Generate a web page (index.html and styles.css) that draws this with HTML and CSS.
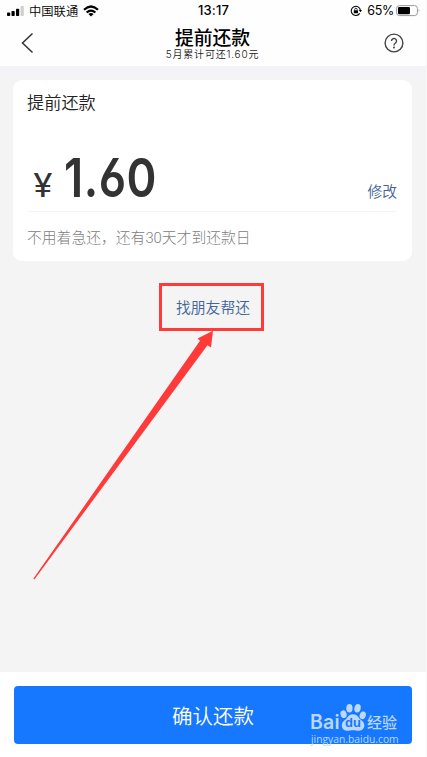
FILE: index.html
```html
<!DOCTYPE html>
<html lang="zh-CN">
<head>
<meta charset="utf-8">
<title>提前还款</title>
<link rel="stylesheet" href="styles.css">
</head>
<body>
<div class="screen">
  <header class="top">
    <div class="status">
      <div class="status-left">
        <svg class="signal" width="18" height="11" viewBox="0 0 18 11"><g fill="#000"><rect x="0" y="6.5" width="3.2" height="3.5" rx=".8"/><rect x="4.5" y="5" width="3.2" height="5" rx=".8"/><rect x="9" y="2.7" width="3.2" height="7.3" rx=".8"/></g><rect x="13.6" y="0" width="3.2" height="10" rx=".8" fill="#cfcfcf"/></svg>
        <span class="carrier">中国联通</span>
        <svg class="wifi" width="16" height="12" viewBox="0 0 16 12"><g fill="none" stroke="#000" stroke-width="2.2"><path d="M1 4.7Q8-1.7 15 4.7"/><path d="M3.6 7.5Q8 3.7 12.4 7.5"/></g><path d="M5.4 8.9Q8 7 10.6 8.9L8 11.6Z"/></svg>
      </div>
      <span class="clock">13:17</span>
      <div class="status-right">
        <svg class="lock" width="12" height="12" viewBox="0 0 12 12"><path d="M10.400 5.300A4.600 4.600 0 1 0 9.700 8.400" fill="none" stroke="#000" stroke-width="1.1"/><path d="M8.700 5H12L10.500 7.2Z"/><rect x="3.8" y="5.300" width="4.200" height="3" rx=".4"/><path d="M4.600 5.500V4.600a1.300 1.300 0 0 1 2.600 0v.9" fill="none" stroke="#000" stroke-width=".8"/></svg>
        <span class="percent">65%</span>
        <svg class="battery" width="25" height="12" viewBox="0 0 25 12"><rect x=".6" y=".6" width="20.8" height="10" rx="2.8" fill="none" stroke="#999" stroke-width="1"/><rect x="2" y="2" width="12" height="7.2" rx="1.3"/><path d="M22.7 3.8q1.5 1.8 0 3.6z" fill="#999"/></svg>
      </div>
    </div>
    <nav class="nav">
      <svg class="back" width="14" height="22" viewBox="0 0 14 22"><path d="M12.500 1.500L2.500 11l10 9.500" fill="none" stroke="#333" stroke-width="1.5"/></svg>
      <div class="heading">
        <h1>提前还款</h1>
        <p>5月累计可还1.60元</p>
      </div>
      <svg class="help" width="20" height="20" viewBox="0 0 20 20" fill="none" stroke="#444" stroke-width="1.4"><circle cx="10" cy="10" r="8.900"/><path d="M7.500 8a2.500 2.500 0 1 1 4.200 1.800q-1.700 1.300-1.700 2.600"/><circle cx="10" cy="14.500" r=".9" fill="#333" stroke="none"/></svg>
    </nav>
  </header>
  <main class="content">
    <section class="card">
      <h2>提前还款</h2>
      <div class="amount-row">
        <span class="yen">¥</span>
        <span class="amount">1.60</span>
        <a class="edit">修改</a>
      </div>
      <p class="hint">不用着急还，还有30天才到还款日</p>
    </section>
    <div class="friend">
      <a>找朋友帮还</a>
      <svg class="arrow" width="190" height="260" viewBox="0 0 190 260"><path d="M180 .7L178 17.500L174.500 15.300L1.400 249.500L.3 248.800L167 10.800L164.500 8.500Z" fill="#ff3b39"/></svg>
    </div>
  </main>
  <footer class="footer">
    <button class="confirm">确认还款</button>
    <div class="watermark">
      <div class="brand">
        <span class="bai">Bai</span>
        <span class="paw"><svg width="26" height="29" viewBox="0 0 24 29" preserveAspectRatio="none" fill="currentColor"><ellipse cx="3.300" cy="11.200" rx="2.800" ry="3.900" transform="rotate(-15 3.300 11.200)"/><ellipse cx="8.700" cy="5.200" rx="2.900" ry="4.300"/><ellipse cx="16.200" cy="5.300" rx="2.900" ry="4.300" transform="rotate(10 16.200 5.300)"/><ellipse cx="21" cy="12.300" rx="2.800" ry="3.900" transform="rotate(15 21 12.300)"/><path d="M12 11.200c-4.500 0-4.700 3.700-7.500 5.800-4.700 3.600-3.300 10.500 2 10.700 2 .1 3.500-.5 5.500-.5s3.500.6 5.500.5c5.300-.2 7-7 2-10.700-2.800-2.100-3-5.800-7.500-5.800z"/></svg><span class="du">du</span></span>
        <span class="jy">经验</span>
      </div>
      <div class="site">jingyan.baidu.com</div>
    </div>
  </footer>
</div>
</body>
</html>
```
FILE: styles.css
```css
* {
  box-sizing: border-box;
}

body {
  margin: 0;
  background: #f7f7f8;
  font-family: "Liberation Sans", "Noto Sans CJK SC", sans-serif;
}

h1, h2, p {
  margin: 0;
}

svg {
  display: block;
  flex: none;
}

.screen {
  width: 426px;
  height: 757px;
  display: flex;
  flex-direction: column;
  background: #f4f4f4;
}

.top {
  height: 66px;
  background: #fefefe;
}

.status {
  height: 21px;
  display: grid;
  grid-template-columns: 1fr auto 1fr;
  align-items: center;
  padding: 0 6px 0 7px;
}

.status-left, .status-right {
  display: flex;
  align-items: center;
}

.signal {
  margin-top: 1px;
}

.carrier {
  margin: 0 5px 0 4px;
  font: 350 12.3px/20px "Noto Sans CJK SC", sans-serif;
}

.clock {
  font: 500 13px/21px Inter, sans-serif;
  letter-spacing: .15px;
}

.status-right {
  justify-content: flex-end;
}

.percent {
  margin: 1px 2px 0 5px;
  font: 12.500px/20px Inter, sans-serif;
  letter-spacing: -.3px;
}

.battery {
  margin-right: -1px;
}

.nav {
  height: 45px;
  display: grid;
  grid-template-columns: 1fr auto 1fr;
  padding: 0 22px 0 20px;
}

.back {
  margin-top: 11px;
}

.help {
  margin-top: 12px;
  justify-self: end;
}

.heading {
  text-align: center;
  padding: 5px 0 0 1px;
}

.heading h1 {
  font: 500 18.800px/22px "Noto Sans CJK SC", sans-serif;
}

.heading p {
  font: 350 10px/12px Inter, "Noto Sans CJK SC", sans-serif;
  letter-spacing: .8px;
  color: #222;
  white-space: nowrap;
}

.content {
  flex: 1;
  padding: 14px 14px 0 13px;
  background: linear-gradient(#f3f3f8, #f4f4f4 26px);
}

.card {
  height: 181px;
  padding: 9px 15px 0 14px;
  border-radius: 9px;
  background: #fff;
}

.card h2 {
  font: 350 17.200px/25px "Noto Sans CJK SC", sans-serif;
  color: #222;
}

.amount-row {
  height: 98px;
  display: flex;
  align-items: baseline;
  padding-top: 31px;
  border-bottom: 1px solid #f4f4f4;
  color: #333;
}

.yen {
  width: 36px;
  padding-left: 6px;
  font: 33px/62px Roboto, sans-serif;
  transform: scaleX(1.08);
  transform-origin: left;
}

.amount {
  margin-left: 1px;
  font: 600 54px/65px Inter, sans-serif;
  font-feature-settings: "cv03", "ss01";
  letter-spacing: .6px;
  transform: scaleX(.84);
  transform-origin: left;
}

.edit {
  margin-left: auto;
  font: 350 14.700px/22px "Noto Sans CJK SC", sans-serif;
  color: #416599;
}

.hint {
  padding-top: 15px;
  font: 300 14.800px/22px Roboto, "Noto Sans CJK SC", sans-serif;
  color: #808080;
}

.friend {
  position: relative;
  width: 105px;
  height: 48px;
  margin: 22px 0 0 146px;
  border: 3px solid #ff3b39;
  text-align: center;
  padding-left: 3px;
  font: 350 14.800px/41px "Noto Sans CJK SC", sans-serif;
  color: #416599;
}

.arrow {
  position: absolute;
  right: 38px;
  top: 44px;
}

.footer {
  position: relative;
  height: 85px;
  padding: 14px 14px 13px;
  background: #fff;
}

.confirm {
  display: block;
  width: 398px;
  height: 58px;
  padding: 0;
  border: 0;
  border-radius: 4px;
  background: #1677ff;
  color: #fff;
  font: 350 20.500px/58px "Noto Sans CJK SC", sans-serif;
}

.watermark {
  position: absolute;
  left: 310px;
  top: 31px;
  color: #bbd8ff;
}

.brand {
  height: 29px;
  display: flex;
  align-items: flex-end;
}

.bai {
  width: 30px;
  font: 600 19.500px/20px Inter, sans-serif;
  letter-spacing: .2px;
}

.paw {
  position: relative;
}

.du {
  position: absolute;
  left: 5px;
  top: 13px;
  font: bold 13px/14px "Liberation Sans", sans-serif;
  color: #1677ff;
}

.jy {
  margin-left: 1px;
  font: 500 15px/20px "Noto Sans CJK SC", sans-serif;
}

.site {
  padding-left: 1px;
  font: 10.300px/15px "Open Sans", sans-serif;
}
```
